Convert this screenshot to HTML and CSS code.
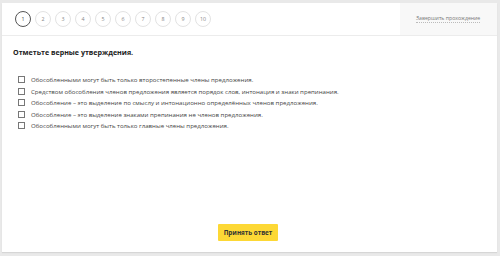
FILE: index.html
```html
<!DOCTYPE html>
<html lang="ru">
<head>
<meta charset="utf-8">
<link rel="stylesheet" href="styles.css">
</head>
<body>
<div class="card">
  <div class="header">
    <div class="steps">
      <span class="step active">1</span>
      <span class="step">2</span>
      <span class="step">3</span>
      <span class="step">4</span>
      <span class="step">5</span>
      <span class="step">6</span>
      <span class="step">7</span>
      <span class="step">8</span>
      <span class="step">9</span>
      <span class="step">10</span>
    </div>
    <div class="finish"><span class="finish-link">Завершить прохождение</span></div>
  </div>
  <div class="body">
    <h1 class="title">Отметьте верные утверждения.</h1>
    <ul class="options">
      <li><span class="box"></span>Обособленными могут быть только второстепенные члены предложения.</li>
      <li><span class="box"></span>Средством обособления членов предложения является порядок слов, интонация и знаки препинания.</li>
      <li><span class="box"></span>Обособление – это выделение по смыслу и интонационно определённых членов предложения.</li>
      <li><span class="box"></span>Обособление – это выделение знаками препинания не членов предложения.</li>
      <li><span class="box"></span>Обособленными могут быть только главные члены предложения.</li>
    </ul>
  </div>
  <div class="footer">
    <button class="submit">Принять ответ</button>
  </div>
</div>
</body>
</html>
```

FILE: styles.css
```css
html, body {
  margin: 0;
  padding: 0;
}
body {
  background: #e9e9e9;
  font-family: "Open Sans", "Liberation Sans", sans-serif;
  color: #333;
  padding: 3px 3px 4px 2px;
  height: 256px;
  box-sizing: border-box;
}
.card {
  background: #fff;
  height: 249px;
  display: flex;
  flex-direction: column;
  box-shadow: 0 1px 1px rgba(0,0,0,0.08);
}
.header {
  display: flex;
  height: 32px;
  border-bottom: 1px solid #ececec;
}
.steps {
  flex: 1;
  display: flex;
  align-items: center;
  gap: 4px;
  padding-left: 13px;
}
.step {
  width: 16px;
  height: 16px;
  box-sizing: border-box;
  border: 1px solid #e3e3e3;
  border-radius: 50%;
  display: flex;
  align-items: center;
  justify-content: center;
  font-size: 5.3px;
  color: #888;
}
.step.active {
  border-color: #555;
  color: #444;
}
.finish {
  width: 97px;
  background: #f8f8f8;
  display: flex;
  align-items: center;
  padding-left: 16px;
  box-sizing: border-box;
}
.finish-link {
  font-size: 5.2px;
  color: #777;
  border-bottom: 1px dotted #bbb;
  line-height: 7px;
}
.body {
  flex: 1;
  padding: 10px 11px 0;
}
.title {
  margin: 0;
  font-size: 7.1px;
  font-weight: 700;
  color: #222;
  line-height: 12px;
}
.options {
  list-style: none;
  margin: 16px 0 0;
  padding: 0 0 0 5px;
}
.options li {
  display: flex;
  align-items: center;
  font-size: 6.1px;
  color: #444;
  height: 11.5px;
}
.box {
  width: 5px;
  height: 5px;
  border: 1px solid #777;
  margin-right: 6px;
  flex: none;
}
.footer {
  display: flex;
  justify-content: center;
  padding-bottom: 11px;
}
.submit {
  background: #fdd835;
  border: none;
  border-radius: 1px;
  font-family: "Open Sans", "Liberation Sans", sans-serif;
  font-size: 6.3px;
  font-weight: 700;
  color: #333;
  width: 60px;
  height: 17px;
  padding: 0;
  margin-left: -3px;
}
```
